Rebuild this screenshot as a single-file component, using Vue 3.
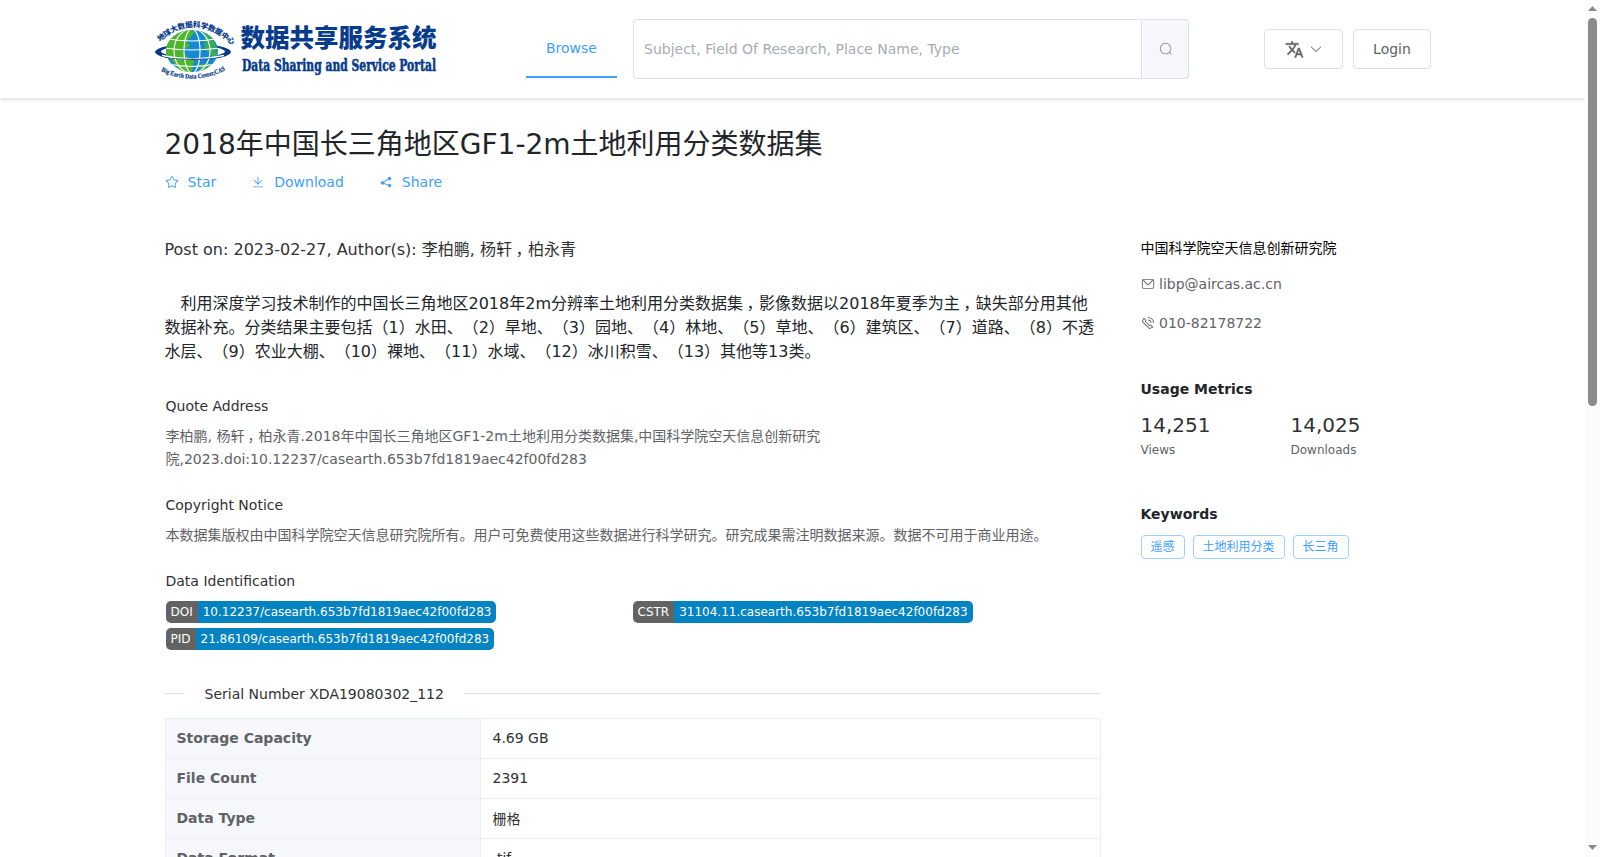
<template>
  <div class="page">
    <div class="viewport">
      <header class="header">
        <svg class="logo" width="290" height="70" viewBox="0 0 290 70">
          <defs>
            <path id="arc-top" d="M10 28 Q44 -3 82 31" />
            <path id="arc-bottom" d="M11 57 Q43 73 78 55" />
            <clipPath id="globe-clip"><ellipse cx="42" cy="37" rx="26" ry="21" /></clipPath>
          </defs>
          <path d="M5 38a38 8 0 0 1 76 0a38 8 0 0 1 -76 0zM11 37.500a32 5.500 0 0 0 64 0a32 5.500 0 0 0 -64 0z" fill="#073985" fill-rule="evenodd" />
          <ellipse cx="42" cy="37" rx="26" ry="21" fill="#1688d2" />
          <g clip-path="url(#globe-clip)">
            <path d="M14 31 L22 18 34 14 45 17 41 23 36 27 40 32 32 36 37 43 44 46 42 58 32 60 22 46 14 41z" fill="#4fb52c" />
            <path d="M54 18l7 4 5 10 1 10-5 2-3-6-5-2 1-8z" fill="#37ad55" />
            <path d="M48 51l10-2 3 3-9 5z" fill="#3aae4c" />
            <g fill="none" stroke="#fff" stroke-width="1.100">
              <ellipse cx="42" cy="37" rx="8" ry="22" />
              <ellipse cx="42" cy="37" rx="18" ry="22" />
              <path d="M18 25q24 4 48 0M14 34q28 4 56 0M18 50q24 5 48 0" />
            </g>
          </g>
          <path d="M12 41.500Q43 48.500 74 41.500" fill="none" stroke="#fff" stroke-width="1.500" />
          <path d="M5 38C8 48.500 78 48.500 81 38C79 43 66 44.800 43 44.800C20 44.800 7 43 5 38z" fill="#073985" />
          <text class="logo-arc"><textPath href="#arc-top" textLength="81">地球大数据科学数据中心</textPath></text>
          <text class="logo-arc logo-arc-en"><textPath href="#arc-bottom" textLength="67" lengthAdjust="spacingAndGlyphs">Big Earth Data Center,CAS</textPath></text>
          <text class="logo-title" x="90.5" y="33" textLength="196" lengthAdjust="spacingAndGlyphs">数据共享服务系统</text>
          <text class="logo-sub" x="92" y="57" textLength="194" lengthAdjust="spacingAndGlyphs">Data Sharing and Service Portal</text>
        </svg>
        <nav class="nav"><a class="nav-item">Browse</a></nav>
        <div class="search">
          <input v-model="keyword" class="search-input" type="text" placeholder="Subject, Field Of Research, Place Name, Type" />
          <button class="search-btn">
            <svg class="icon" viewBox="0 0 1024 1024"><path :d="icons.search" /></svg>
          </button>
        </div>
        <div class="actions">
          <button class="btn btn-lang">
            <svg class="icon-lang" viewBox="0 0 24 24"><path :d="icons.translate" /></svg>
            <svg class="icon" viewBox="0 0 1024 1024"><path :d="icons.arrowDown" /></svg>
          </button>
          <button class="btn btn-login">Login</button>
        </div>
      </header>

      <div class="content">
        <h1 class="title">2018年中国长三角地区GF1-2m土地利用分类数据集</h1>
        <div class="links">
          <a v-for="link in links" :key="link.text" class="link">
            <svg class="icon" viewBox="0 0 1024 1024"><path :d="icons[link.icon]" /></svg>
            <span>{{ link.text }}</span>
          </a>
        </div>

        <div class="columns">
          <main class="main">
            <p class="post">Post on: 2023-02-27, Author(s): 李柏鹏, 杨轩<span class="comma">，</span>柏永青</p>
            <p class="desc">&#12288;利用深度学习技术制作的中国长三角地区2018年2m分辨率土地利用分类数据集<span class="comma">，</span>影像数据以2018年夏季为主<span class="comma">，</span>缺失部分用其他数据补充。分类结果主要包括（1）水田、（2）旱地、（3）园地、（4）林地、（5）草地、（6）建筑区、（7）道路、（8）不透水层、（9）农业大棚、（10）裸地、（11）水域、（12）冰川积雪、（13）其他等13类。</p>

            <section class="block quote">
              <h4>Quote Address</h4>
              <p>李柏鹏, 杨轩<span class="comma">，</span>柏永青.2018年中国长三角地区GF1-2m土地利用分类数据集,中国科学院空天信息创新研究院,2023.doi:10.12237/casearth.653b7fd1819aec42f00fd283</p>
            </section>
            <section class="block copyright">
              <h4>Copyright Notice</h4>
              <p>本数据集版权由中国科学院空天信息研究院所有。用户可免费使用这些数据进行科学研究。研究成果需注明数据来源。数据不可用于商业用途。</p>
            </section>
            <section class="block">
              <h4>Data Identification</h4>
              <div class="badges">
                <div v-for="item in identifiers" :key="item.type" class="badge">
                  <span class="badge-type">{{ item.type }}</span>
                  <span class="badge-value">{{ item.value }}</span>
                </div>
              </div>
            </section>

            <div class="divider"><span>Serial Number XDA19080302_112</span></div>

            <table class="info">
              <tbody>
                <tr v-for="row in rows" :key="row.label">
                  <th>{{ row.label }}</th>
                  <td>{{ row.value }}</td>
                </tr>
              </tbody>
            </table>
          </main>

          <aside class="side">
            <div class="org">中国科学院空天信息创新研究院</div>
            <div class="contact">
              <svg class="icon" viewBox="0 0 1024 1024"><path :d="icons.message" /></svg>
              <span>libp@aircas.ac.cn</span>
            </div>
            <div class="contact">
              <svg class="icon" viewBox="0 0 1024 1024"><path :d="icons.phone" /></svg>
              <span>010-82178722</span>
            </div>
            <h3 class="side-title">Usage Metrics</h3>
            <div class="metrics">
              <div v-for="m in metrics" :key="m.label" class="metric">
                <div class="metric-value">{{ m.value }}</div>
                <div class="metric-label">{{ m.label }}</div>
              </div>
            </div>
            <h3 class="side-title">Keywords</h3>
            <div class="tags">
              <span v-for="tag in tags" :key="tag" class="tag">{{ tag }}</span>
            </div>
          </aside>
        </div>
      </div>
    </div>

    <div class="scrollbar">
      <svg width="9" height="5" viewBox="0 0 9 5"><path d="M4.5 0 9 5H0z" /></svg>
      <div class="scrollbar-track"><div class="scrollbar-thumb"></div></div>
      <svg width="9" height="5" viewBox="0 0 9 5"><path d="M0 0h9L4.5 5z" /></svg>
    </div>
  </div>
</template>

<script setup>
import { ref } from 'vue'

const keyword = ref('')

const links = [
  { icon: 'star', text: 'Star' },
  { icon: 'download', text: 'Download' },
  { icon: 'share', text: 'Share' }
]

const identifiers = [
  { type: 'DOI', value: '10.12237/casearth.653b7fd1819aec42f00fd283' },
  { type: 'CSTR', value: '31104.11.casearth.653b7fd1819aec42f00fd283' },
  { type: 'PID', value: '21.86109/casearth.653b7fd1819aec42f00fd283' }
]

const rows = [
  { label: 'Storage Capacity', value: '4.69 GB' },
  { label: 'File Count', value: '2391' },
  { label: 'Data Type', value: '栅格' },
  { label: 'Data Format', value: '.tif' }
]

const metrics = [
  { value: '14,251', label: 'Views' },
  { value: '14,025', label: 'Downloads' }
]

const tags = ['遥感', '土地利用分类', '长三角']

const icons = {
  search: 'M795.904 750.72l124.992 124.928a32 32 0 0 1-45.248 45.248L750.656 795.904a416 416 0 1 1 45.248-45.248zM480 832a352 352 0 1 0 0-704 352 352 0 0 0 0 704z',
  arrowDown: 'M831.872 340.864 512 652.672 192.128 340.864a30.592 30.592 0 0 0-42.752 0 29.12 29.12 0 0 0 0 41.6L489.664 714.24a32 32 0 0 0 44.672 0l340.288-331.712a29.12 29.12 0 0 0 0-41.728 30.592 30.592 0 0 0-42.752 0z',
  star: 'm512 747.84 228.16 119.936a6.4 6.4 0 0 0 9.28-6.72l-43.52-254.08 184.512-179.904a6.4 6.4 0 0 0-3.52-10.88l-255.104-37.12L517.76 147.904a6.4 6.4 0 0 0-11.52 0L392.192 379.072l-255.104 37.12a6.4 6.4 0 0 0-3.52 10.88L318.08 606.976l-43.584 254.08a6.4 6.4 0 0 0 9.28 6.72L512 747.84zM313.6 924.48a70.4 70.4 0 0 1-102.144-74.24l37.888-220.928L88.96 472.96A70.4 70.4 0 0 1 128 352.896l221.76-32.256 99.2-200.96a70.4 70.4 0 0 1 126.208 0l99.2 200.96 221.824 32.256a70.4 70.4 0 0 1 39.04 120.064L774.72 629.376l37.888 220.928a70.4 70.4 0 0 1-102.144 74.24L512 820.096l-198.4 104.32z',
  download: 'M160 832h704a32 32 0 1 1 0 64H160a32 32 0 1 1 0-64zm384-253.696 236.288-236.352 45.248 45.248L508.8 704 192 387.2l45.248-45.248L480 584.704V128h64v450.304z',
  share: 'm679.872 348.8-301.76 188.608a127.808 127.808 0 0 1 5.12 52.16l279.936 104.96a128 128 0 1 1-22.464 59.904l-279.872-104.96a128 128 0 1 1-16.64-166.272l301.696-188.608a128 128 0 1 1 33.92 54.272z',
  message: 'M128 224v512a64 64 0 0 0 64 64h640a64 64 0 0 0 64-64V224H128zm0-64h768a64 64 0 0 1 64 64v512a128 128 0 0 1-128 128H192A128 128 0 0 1 64 736V224a64 64 0 0 1 64-64zM904 224 656.512 506.88a192 192 0 0 1-289.024 0L120 224h784zm-698.944 0 210.56 240.704a128 128 0 0 0 192.704 0L818.944 224H205.056z',
  phone: 'M79.36 432.256 591.744 944.64a32 32 0 0 0 35.2 6.784l253.44-108.544a32 32 0 0 0 9.984-52.032l-153.856-153.92a32 32 0 0 0-36.928-6.016l-69.888 34.944L358.08 394.24l35.008-69.888a32 32 0 0 0-5.952-36.928L233.152 133.568a32 32 0 0 0-52.032 10.048L72.512 397.056a32 32 0 0 0 6.784 35.2zm60.48-29.952 81.536-190.08L325.568 316.48l-24.64 49.216-20.608 41.216 32.576 32.64 271.552 271.552 32.64 32.64 41.216-20.672 49.28-24.576 104.192 104.128-190.08 81.472L139.84 402.304zM512 320v-64a256 256 0 0 1 256 256h-64a192 192 0 0 0-192-192zm0-192V64a448 448 0 0 1 448 448h-64a384 384 0 0 0-384-384z',
  translate: 'm12.87 15.07-2.54-2.51.03-.03A17.52 17.52 0 0 0 14.07 6H17V4h-7V2H8v2H1v2h11.17C11.5 7.92 10.44 9.75 9 11.35 8.07 10.32 7.3 9.19 6.69 8h-2c.73 1.63 1.73 3.17 2.98 4.56l-5.09 5.02L4 19l5-5 3.11 3.11.76-2.04zM18.5 10h-2L12 22h2l1.12-3h4.75L21 22h2l-4.5-12zm-2.62 7 1.62-4.33L19.12 17h-3.24z'
}
</script>

<style>
body {
  margin: 0;
  overflow: hidden;
}
</style>

<style scoped>
.page {
  display: flex;
  height: 857px;
  overflow: hidden;
  background: #fff;
  color: #303133;
  font-family: 'DejaVu Sans', 'Noto Sans CJK SC', sans-serif;
  font-size: 14px;
  text-spacing-trim: space-all;
}

.page * {
  box-sizing: border-box;
}

.viewport {
  width: 1585px;
  height: 857px;
  overflow: hidden;
}

h1,
h3,
h4,
p {
  margin: 0;
}

button,
input {
  font: inherit;
}

.icon {
  width: 14px;
  height: 14px;
  fill: currentColor;
  flex: none;
}

/* header */
.header {
  display: flex;
  align-items: center;
  height: 98px;
  padding-left: 150px;
  box-shadow: 0 2px 4px rgba(0, 0, 0, 0.12);
}

.logo {
  flex: none;
  overflow: visible;
}

.logo-title {
  fill: #073b8b;
  font-family: 'Noto Sans CJK SC', sans-serif;
  font-size: 24.5px;
  font-weight: 900;
}

.logo-sub {
  fill: #073b8b;
  stroke: #073b8b;
  stroke-width: 0.6px;
  font-family: 'DejaVu Serif', serif;
  font-size: 17px;
  font-weight: 700;
}

.logo-arc {
  fill: #073b8b;
  font-family: 'Noto Sans CJK SC', sans-serif;
  font-size: 7.5px;
  font-weight: 900;
}

.logo-arc-en {
  font-family: 'Liberation Serif', serif;
  font-size: 6.5px;
  stroke: #073b8b;
  stroke-width: 0.2px;
}

.nav {
  margin: 0 16px 1px 86px;
}

.nav-item {
  display: flex;
  align-items: center;
  justify-content: center;
  width: 91px;
  height: 59px;
  padding-top: 1px;
  border-bottom: 2px solid #409eff;
  color: #409eff;
}

.search {
  display: flex;
  width: 556px;
  height: 60px;
}

.search-input {
  width: 509px;
  padding: 0 10px;
  border: 1px solid #dcdfe6;
  border-radius: 4px 0 0 4px;
  outline: none;
}

.search-input::placeholder {
  color: #a8abb2;
  opacity: 1;
}

.search-btn {
  display: flex;
  align-items: center;
  justify-content: center;
  width: 47px;
  padding: 0;
  border: 1px solid #dcdfe6;
  border-left: 1px solid #fff;
  border-radius: 0 4px 4px 0;
  background: #f5f7fa;
  color: #909399;
}

.actions {
  display: flex;
  gap: 10px;
  margin-left: 75px;
}

.btn {
  display: flex;
  align-items: center;
  justify-content: center;
  height: 40px;
  padding: 0;
  border: 1px solid #dcdfe6;
  border-radius: 4px;
  background: #fff;
  color: #606266;
}

.btn-lang {
  gap: 5px;
  width: 79px;
}

.btn-login {
  width: 78px;
}

.icon-lang {
  width: 19px;
  height: 19px;
  fill: #606266;
  stroke: #606266;
  stroke-width: 0.5;
}

/* content */
.content {
  padding: 26px 0 0 164.5px;
}

.title {
  height: 41px;
  color: #212529;
  font-size: 28px;
  font-weight: 400;
  line-height: 42px;
}

.links {
  display: flex;
  gap: 35px;
  height: 34px;
}

.link {
  display: flex;
  align-items: center;
  gap: 9px;
  color: #409eff;
}

.columns {
  display: grid;
  grid-template-columns: 936px 300px;
  gap: 40px;
  padding-top: 37px;
}

.post {
  padding-top: 2px;
  font-size: 16px;
  line-height: 24px;
}

.desc {
  margin-top: 30px;
  color: #212529;
  font-size: 16px;
  line-height: 24px;
}

/* full-width comma sits in the middle of its cell */
.comma {
  padding-left: 0.22em;
  margin-right: -0.22em;
}

.block {
  margin-left: 1px;
}

.block h4 {
  height: 23px;
  font-size: 14px;
  font-weight: 400;
  line-height: 23px;
}

.block p {
  margin-top: 7px;
  color: #606266;
  line-height: 23px;
}

.quote {
  margin-top: 31px;
}

.quote,
.copyright {
  margin-bottom: 23px;
}

.badges {
  display: grid;
  grid-template-columns: 467px auto;
  justify-items: start;
  gap: 5px 0;
  margin-top: 8px;
}

.badge {
  display: flex;
  height: 22px;
  overflow: hidden;
  border-radius: 5px;
  color: #fff;
  font-size: 12px;
  line-height: 22px;
}

.badge-type {
  padding: 0 5px;
  background: #636363;
}

.badge-value {
  padding: 0 5px;
  background: #0483c3;
}

.divider {
  display: flex;
  align-items: center;
  gap: 20px;
  height: 24px;
  margin-top: 32px;
}

.divider::before,
.divider::after {
  content: '';
  height: 1px;
  margin-bottom: 1px;
  background: #dcdfe6;
}

.divider::before {
  width: 20px;
}

.divider::after {
  flex: 1;
}

.info {
  width: 936px;
  margin-top: 12px;
  border-collapse: collapse;
  table-layout: fixed;
}

.info th,
.info td {
  height: 40px;
  padding: 0 12px 1px 11px;
  border: 1px solid #ebeef5;
  text-align: left;
}

.info th {
  width: 315px;
  background: #f5f7fa;
  color: #606266;
}

.info td {
  padding-left: 12px;
}

/* sidebar */
.side {
  line-height: 24px;
}

.org {
  margin-bottom: 12px;
  color: #000;
}

.contact {
  display: flex;
  align-items: center;
  gap: 4.5px;
  height: 24px;
  margin-bottom: 15px;
  color: #606266;
}

.side-title {
  margin-top: 42px;
  color: #212529;
  font-size: 14px;
  font-weight: 700;
  line-height: 24px;
}

.metrics {
  display: grid;
  grid-template-columns: 150px 150px;
  margin-top: 10px;
}

.metric-value {
  font-size: 20px;
  line-height: 28px;
}

.metric-label {
  height: 21px;
  color: #606266;
  font-size: 12px;
  line-height: 22px;
}

.tags {
  display: flex;
  gap: 8px;
  margin-top: 9px;
}

.tag {
  height: 24px;
  padding: 0 9px;
  border: 1px solid #a0cfff;
  border-radius: 4px;
  color: #409eff;
  font-size: 12px;
  line-height: 22px;
}

/* scrollbar */
.scrollbar {
  display: flex;
  flex-direction: column;
  align-items: center;
  width: 15px;
  padding: 6px 0 7px;
  background: #fcfcfc;
}

.scrollbar svg {
  flex: none;
  fill: #8b8b8b;
}

.scrollbar-track {
  flex: 1;
  padding-top: 7px;
}

.scrollbar-thumb {
  width: 9px;
  height: 388px;
  border-radius: 5px;
  background: #8b8b8b;
}
</style>
